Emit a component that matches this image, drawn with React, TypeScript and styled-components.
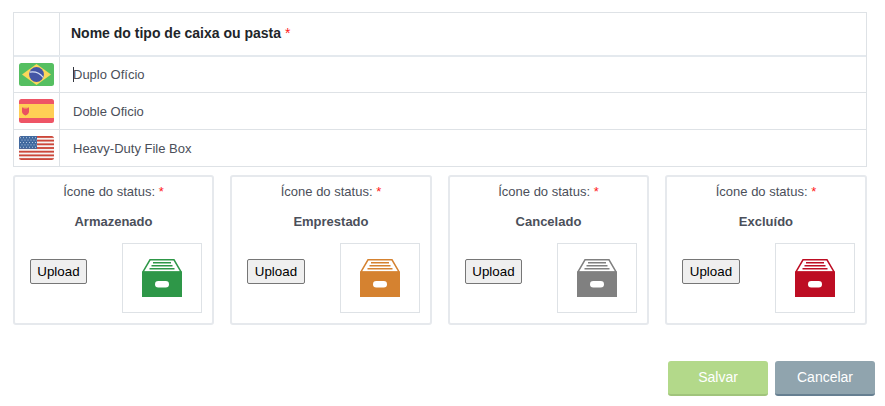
import React from "react";
import styled, { createGlobalStyle } from "styled-components";

const GlobalStyle = createGlobalStyle`
  * { box-sizing: border-box; }
  body {
    margin: 0;
    background: #fff;
    color: #4b4f5a;
    font: 13px/18px "Liberation Sans", Arial, sans-serif;
  }
`;

const Page = styled.main`
  width: 885px;
  height: 406px;
  padding: 12px 10px 0 13px;
`;

const NameTable = styled.div`
  width: 854px;
  border: 1px solid #dee2e6;
`;

const Row = styled.div<{ $head?: boolean }>`
  display: grid;
  grid-template-columns: 46px 1fr;
  height: ${(p) => (p.$head ? 44 : 37)}px;
  border-bottom: ${(p) => (p.$head ? "2px solid #e4e9ee" : "1px solid #dee2e6")};
  &:nth-child(2) { height: 36px; }
  &:last-child { height: 36px; border-bottom: 0; }
`;

const FlagCell = styled.div`
  display: flex;
  align-items: center;
  justify-content: center;
  border-right: 1px solid #dee2e6;
  svg { display: block; }
`;

const HeadCell = styled.div`
  padding: 11px 11px 0;
  font-size: 14px;
  font-weight: 700;
  color: #212529;
`;

const Required = styled.span`
  color: #ff1a1a;
  font-weight: 400;
`;

const NameCell = styled.div`
  display: flex;
  align-items: flex-end;
  padding: 0 0 8px 13px;
`;

const Caret = styled.span`
  width: 1px;
  height: 15px;
  margin: 0 -1px 2px 0;
  background: #33363f;
`;

const Cards = styled.section`
  display: grid;
  grid-template-columns: repeat(4, 1fr);
  gap: 16px;
  width: 854px;
  margin: 8px 0 0 -0.3px;
`;

const Card = styled.article`
  height: 150px;
  padding: 6px 10px 0 15px;
  border: 2px solid #e6e9ed;
  border-radius: 3px;
`;

const CardLabel = styled.div`
  padding-right: 5px;
  text-align: center;
`;

const CardTitle = styled.div`
  margin-top: 12px;
  padding-right: 5px;
  text-align: center;
  font-weight: 700;
`;

const UploadRow = styled.div`
  display: flex;
  align-items: flex-start;
  justify-content: space-between;
  margin-top: 12px;
`;

const UploadButton = styled.button`
  width: 57.5px;
  height: 25px;
  margin-top: 16px;
  padding: 0;
  border: 1px solid #767676;
  border-radius: 2px;
  background: #efefef;
  color: #000;
  font: 13.333px "Liberation Sans", Arial, sans-serif;
`;

const Preview = styled.div`
  display: flex;
  align-items: center;
  justify-content: center;
  width: 80px;
  height: 70px;
  border: 1px solid #dee2e6;
`;

const Actions = styled.footer`
  display: flex;
  justify-content: flex-end;
  gap: 7px;
  margin-top: 36px;
`;

const ActionButton = styled.button<{ $tone: string; $edge: string }>`
  width: 100px;
  height: 35px;
  padding: 0 0 1px;
  border: 0;
  border-bottom: 2px solid ${(p) => p.$edge};
  border-radius: 3px;
  background: ${(p) => p.$tone};
  color: #fff;
  font: 14px "Liberation Sans", Arial, sans-serif;
`;

const FlagBrazil = () => (
  <svg width="35" height="23" viewBox="0 0 35 23">
    <rect width="35" height="23" rx="2.5" fill="#55bf61" />
    <path d="M17.5 1 32 11.5 17.5 22 3 11.5Z" fill="#fbd75b" />
    <circle cx="17.5" cy="11.5" r="7.4" fill="#4456a6" />
    <path d="M10.6 9.1c5.5-1 10.5 1.2 13.6 5.4" fill="none" stroke="#d6e0f5" strokeWidth="1.2" />
  </svg>
);

const FlagSpain = () => (
  <svg width="35" height="24" viewBox="0 0 35 24">
    <rect width="35" height="24" rx="2.5" fill="#ee5566" />
    <rect y="5" width="35" height="14" fill="#ffcf55" />
    <path d="M3 8.5h1.600v.8h4v-.8h1.400v4q0 2.500-3.500 4q-3.500-1.500-3.500-4Z" fill="#ea5060" />
    <path d="M5 9h3" stroke="#f09a55" strokeWidth="1" />
  </svg>
);

const stripes = [0, 1, 2, 3, 4, 5, 6];
const starRows = [0, 1, 2, 3, 4];

const FlagUsa = () => (
  <svg width="35" height="24" viewBox="0 0 35 24">
    <defs>
      <clipPath id="usa-shape">
        <rect width="35" height="24" rx="2.5" />
      </clipPath>
    </defs>
    <g clipPath="url(#usa-shape)">
      <rect width="35" height="24" fill="#f6f3f2" />
      {stripes.map((i) => (
        <rect key={i} y={i * 3.692} width="35" height="1.846" fill="#cc4639" />
      ))}
      <rect width="18" height="12.9" fill="#41699f" />
      {starRows.map((i) => (
        <path
          key={i}
          d={`M${i % 2 ? 2.5 : 1} ${1.7 + i * 2.4}H18`}
          stroke="#b3c7df"
          strokeWidth="1"
          strokeDasharray="1 2"
        />
      ))}
    </g>
  </svg>
);

const BoxIcon = ({ color }: { color: string }) => (
  <svg width="40" height="38" viewBox="0 0 40 38">
    <path d="M8 .75H32L39.2 13H.8Z" fill="#fff" stroke={color} strokeWidth="1.5" />
    <path d="M11 3.7h18M9.5 6.7h21M7.5 9.7h25" stroke={color} strokeWidth="1.4" />
    <path d="M0 12.5H40V38H0Z" fill={color} />
    <rect x="13" y="22" width="14" height="6.5" rx="3.25" fill="#fff" />
  </svg>
);

const names = [
  { Flag: FlagBrazil, text: "Duplo Ofício", focused: true },
  { Flag: FlagSpain, text: "Doble Oficio", focused: false },
  { Flag: FlagUsa, text: "Heavy-Duty File Box", focused: false },
];

const statuses = [
  { title: "Armazenado", color: "#2e9748" },
  { title: "Emprestado", color: "#d58230" },
  { title: "Cancelado", color: "#808080" },
  { title: "Excluído", color: "#bd0d23" },
];

export default function App() {
  return (
    <Page>
      <GlobalStyle />
      <NameTable>
        <Row $head>
          <FlagCell />
          <HeadCell>
            Nome do tipo de caixa ou pasta <Required>*</Required>
          </HeadCell>
        </Row>
        {names.map(({ Flag, text, focused }) => (
          <Row key={text}>
            <FlagCell>
              <Flag />
            </FlagCell>
            <NameCell>
              {focused && <Caret />}
              {text}
            </NameCell>
          </Row>
        ))}
      </NameTable>
      <Cards>
        {statuses.map(({ title, color }) => (
          <Card key={title}>
            <CardLabel>
              Ícone do status: <Required>*</Required>
            </CardLabel>
            <CardTitle>{title}</CardTitle>
            <UploadRow>
              <UploadButton>Upload</UploadButton>
              <Preview>
                <BoxIcon color={color} />
              </Preview>
            </UploadRow>
          </Card>
        ))}
      </Cards>
      <Actions>
        <ActionButton $tone="#b3d98a" $edge="#a0c47b">Salvar</ActionButton>
        <ActionButton $tone="#90a4ae" $edge="#667f91">Cancelar</ActionButton>
      </Actions>
    </Page>
  );
}
